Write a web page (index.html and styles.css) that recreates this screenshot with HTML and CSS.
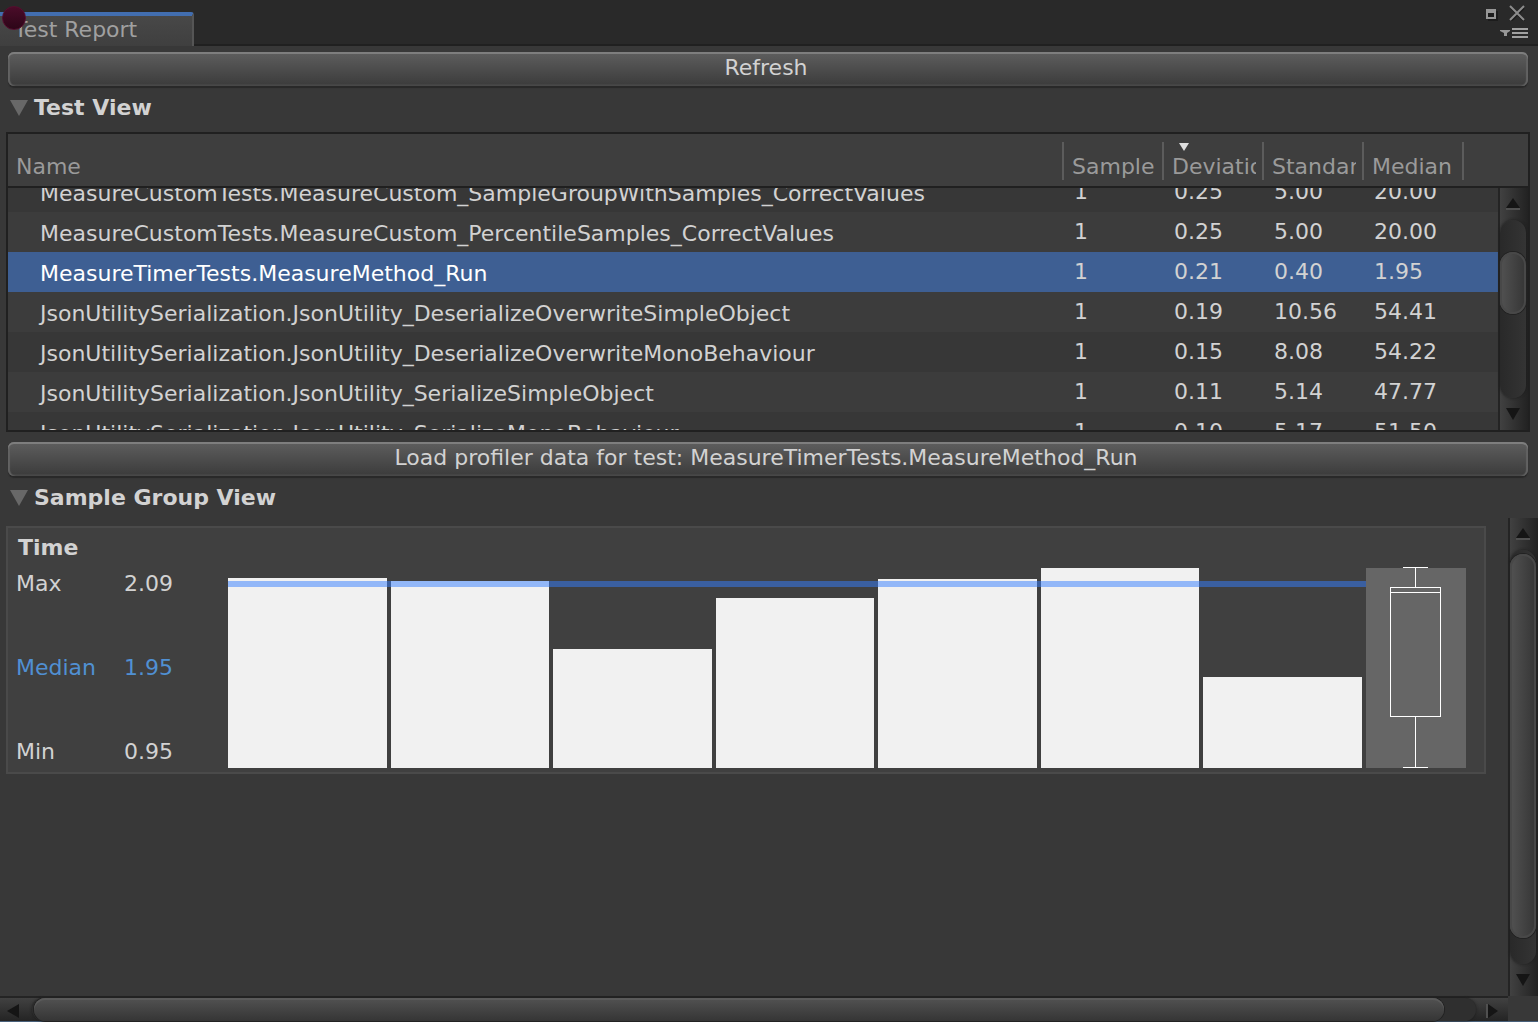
FILE: index.html
```html
<!DOCTYPE html>
<html lang="en">
<head>
<meta charset="utf-8">
<title>Test Report</title>
<link rel="stylesheet" href="styles.css">
</head>
<body>
<header class="tabbar">
  <button class="tab" type="button">Test Report</button>
  <span class="record-dot"></span>
  <div class="window-controls">
    <div class="window-row">
      <button class="icon-button" type="button" aria-label="Maximize"><svg width="12" height="12" viewBox="0 0 12 12"><path d="M2 2h10v10H2z" fill="#1c1c1c"/><path fill-rule="evenodd" d="M0 0h10v10H0zM2 4h6v4H2z" fill="#979797"/></svg></button>
      <button class="icon-button" type="button" aria-label="Close"><svg width="16" height="16" viewBox="0 0 16 16"><path d="M2 3L15 16M15 3L2 16" stroke="#1b1b1b" stroke-width="2"/><path d="M1 1L15 15M15 1L1 15" stroke="#8c8c8c" stroke-width="2"/></svg></button>
    </div>
    <button class="icon-button" type="button" aria-label="Window menu"><svg width="28" height="10" viewBox="0 0 28 10"><path d="M0 2h10v1L7 5v3H4V5L0 3z" fill="#979797"/><path d="M12 0h16v2H12zM12 4h16v2H12zM12 8h16v2H12z" fill="#a0a0a0"/></svg></button>
  </div>
</header>
<main class="window">
  <section class="test-view">
    <button class="wide-button" type="button">Refresh</button>
    <h2 class="foldout"><button class="foldout-button" type="button" aria-expanded="true"><svg width="18" height="16" viewBox="0 0 18 16"><path d="M0 0h18L9 16z"/></svg>Test View</button></h2>
    <div class="list">
      <table class="tests">
        <thead>
          <tr><th>Name</th><th><span>Sample</span></th><th class="sorted"><span>Deviation</span></th><th><span>Standard</span></th><th><span>Median</span></th></tr>
        </thead>
        <tbody>
          <tr><td>MeasureCustomTests.MeasureCustom_SampleGroupWithSamples_CorrectValues</td><td>1</td><td>0.25</td><td>5.00</td><td>20.00</td></tr>
          <tr><td>MeasureCustomTests.MeasureCustom_PercentileSamples_CorrectValues</td><td>1</td><td>0.25</td><td>5.00</td><td>20.00</td></tr>
          <tr class="selected"><td>MeasureTimerTests.MeasureMethod_Run</td><td>1</td><td>0.21</td><td>0.40</td><td>1.95</td></tr>
          <tr><td>JsonUtilitySerialization.JsonUtility_DeserializeOverwriteSimpleObject</td><td>1</td><td>0.19</td><td>10.56</td><td>54.41</td></tr>
          <tr><td>JsonUtilitySerialization.JsonUtility_DeserializeOverwriteMonoBehaviour</td><td>1</td><td>0.15</td><td>8.08</td><td>54.22</td></tr>
          <tr><td>JsonUtilitySerialization.JsonUtility_SerializeSimpleObject</td><td>1</td><td>0.11</td><td>5.14</td><td>47.77</td></tr>
          <tr><td>JsonUtilitySerialization.JsonUtility_SerializeMonoBehaviour</td><td>1</td><td>0.10</td><td>5.17</td><td>51.50</td></tr>
        </tbody>
      </table>
      <div class="scrollbar vertical list-scrollbar">
        <button class="arrow" type="button" aria-label="Scroll up"><svg width="14" height="12" viewBox="0 0 14 12"><path d="M0 11h14" stroke="#505050" stroke-width="2"/><path d="M7 0l7 10H0z" fill="#151515"/></svg></button>
        <div class="track"><div class="thumb"></div></div>
        <button class="arrow" type="button" aria-label="Scroll down"><svg width="14" height="12" viewBox="0 0 14 12"><path d="M0 0h14L7 12z" fill="#151515"/></svg></button>
      </div>
    </div>
    <button class="wide-button" type="button">Load profiler data for test: MeasureTimerTests.MeasureMethod_Run</button>
    <h2 class="foldout"><button class="foldout-button" type="button" aria-expanded="true"><svg width="18" height="16" viewBox="0 0 18 16"><path d="M0 0h18L9 16z"/></svg>Sample Group View</button></h2>
  </section>
  <section class="groups">
    <div class="groups-content">
      <article class="group">
        <h3 class="group-title">Time</h3>
        <div class="group-body">
          <dl class="stats">
            <div class="stat"><dt>Max</dt><dd>2.09</dd></div>
            <div class="stat median"><dt>Median</dt><dd>1.95</dd></div>
            <div class="stat"><dt>Min</dt><dd>0.95</dd></div>
          </dl>
          <div class="chart">
            <div class="bar" style="height:95%"></div>
            <div class="bar" style="height:93.5%"></div>
            <div class="bar" style="height:59.5%"></div>
            <div class="bar" style="height:85%"></div>
            <div class="bar" style="height:94.5%"></div>
            <div class="bar" style="height:100%"></div>
            <div class="bar" style="height:45.5%"></div>
            <div class="median-line"></div>
          </div>
          <svg class="box-plot" width="100" height="202" viewBox="0 -1 100 202"><path d="M0 0h100v200H0z" fill="#666"/><g fill="none" stroke="#fff" shape-rendering="crispEdges"><path d="M37 -.5H62M49.500 0V19M24.500 19.500H74.500V148.500H24.500zM24.500 24.500H74.500M49.500 149V199M37 199.500H62"/></g></svg>
        </div>
      </article>
    </div>
    <div class="scrollbar vertical groups-scrollbar">
      <button class="arrow" type="button" aria-label="Scroll up"><svg width="14" height="12" viewBox="0 0 14 12"><path d="M0 11h14" stroke="#505050" stroke-width="2"/><path d="M7 0l7 10H0z" fill="#151515"/></svg></button>
      <div class="track"><div class="thumb"></div></div>
      <button class="arrow" type="button" aria-label="Scroll down"><svg width="14" height="12" viewBox="0 0 14 12"><path d="M0 0h14L7 12z" fill="#151515"/></svg></button>
    </div>
  </section>
  <div class="bottom">
    <div class="scrollbar horizontal">
      <button class="arrow" type="button" aria-label="Scroll left"><svg width="12" height="14" viewBox="0 0 12 14"><path d="M12 0v14L0 7z" fill="#151515"/></svg></button>
      <div class="track"><div class="thumb"></div></div>
      <button class="arrow" type="button" aria-label="Scroll right"><svg width="12" height="14" viewBox="0 0 12 14"><path d="M1 0v14" stroke="#505050" stroke-width="2"/><path d="M2 0l10 7-10 7z" fill="#151515"/></svg></button>
    </div>
  </div>
</main>
</body>
</html>
```
FILE: styles.css
```css
* { box-sizing: border-box; }

body {
  margin: 0;
  min-height: 100vh;
  display: flex;
  flex-direction: column;
  background: #383838;
  color: #d2d2d2;
  font: 22px/26px "DejaVu Sans", Verdana, sans-serif;
}

button {
  margin: 0;
  padding: 0;
  border: 0;
  background: none;
  color: inherit;
  font: inherit;
}

svg { display: block; flex: none; }

/* Tab strip */
.tabbar {
  position: relative;
  display: flex;
  justify-content: space-between;
  height: 46px;
  padding-top: 12px;
  background: #292929;
  border-bottom: 2px solid #202020;
}

.tab {
  width: 194px;
  height: 34px;
  padding: 0 0 2px 14px;
  text-align: left;
  color: #a0a0a0;
  background: linear-gradient(#484848, #3f3f3f);
  border-top: 4px solid #426eb0;
  border-right: 2px solid #555;
  border-top-right-radius: 3px;
}

.record-dot {
  position: absolute;
  left: 2px;
  top: 6px;
  width: 24px;
  height: 24px;
  border-radius: 50%;
  background: linear-gradient(#4a0c29, #2d0618);
  border: 1px solid #560d2e;
}

.window-controls {
  display: flex;
  flex-direction: column;
  align-items: flex-end;
  gap: 7px;
  margin-top: -7px;
  padding-right: 10px;
}

.window-row {
  display: flex;
  align-items: flex-end;
  gap: 11px;
  padding-right: 3px;
}

/* Main window */
.window {
  flex: 1;
  display: flex;
  flex-direction: column;
}

.test-view {
  display: flex;
  flex-direction: column;
  padding: 6px 8px 0 6px;
}

.wide-button {
  height: 34px;
  margin: 0 2px;
  padding: 0 4px 3px 0;
  border-radius: 6px;
  background: linear-gradient(#5e5e5e, #3b3b3b);
  box-shadow: inset 0 2px #7e7e7e, inset 2px 0 1px #626262, inset -2px 0 1px #626262, inset 0 -2px #444, 0 2px 1px #292929;
  overflow: hidden;
  white-space: nowrap;
}

.foldout {
  margin: 0;
  height: 42px;
  padding-top: 2px;
  display: flex;
  align-items: center;
  font-size: 22px;
}

.foldout-button {
  display: flex;
  align-items: center;
  gap: 6px;
  padding-left: 4px;
}

.foldout svg { fill: #686868; }

/* Test list */
.list {
  display: flex;
  height: 300px;
  margin: 4px 0 10px;
  border: 2px solid #202020;
}

.tests {
  flex: 1;
  min-width: 0;
  display: flex;
  flex-direction: column;
}

.tests tr {
  display: grid;
  grid-template-columns: minmax(0, 1fr) repeat(4, 100px);
  padding-right: 36px;
}

.tests thead {
  display: block;
  height: 54px;
  margin-right: -30px;
  padding: 8px 28px 4px 0;
  background: #3e3e3e;
  border-bottom: 2px solid #202020;
}

.tests th {
  height: 38px;
  padding: 12px 6px 0 8px;
  text-align: left;
  font-weight: normal;
  color: #9a9a9a;
  white-space: nowrap;
  border-right: 2px solid #5c5c5c;
}

.tests th span {
  display: block;
  overflow: hidden;
}

.sorted { position: relative; }

.sorted::before {
  content: "";
  position: absolute;
  left: 15px;
  top: 1px;
  border: 5px solid transparent;
  border-top: 8px solid #dedede;
  border-bottom: 0;
}

/* The list is scrolled part of a row down. */
.tests tbody {
  display: block;
  flex: 1;
  min-height: 0;
  overflow: hidden;
}

.tests tbody tr:first-child { margin-top: -16px; }

.tests tbody tr { height: 40px; background: #373737; }
.tests tbody tr:nth-child(even) { background: #3c3c3c; }
.tests tbody tr.selected { background: #3e5f93; }

.tests td {
  padding: 7px 0 0 12px;
  white-space: nowrap;
}

.tests td:first-child { padding: 9px 0 0 32px; }
.selected td:first-child { color: #fff; }

/* Scroll bars */
.scrollbar { display: flex; flex: none; }

.scrollbar.vertical {
  flex-direction: column;
  width: 30px;
  border-left: 2px solid #242424;
  background: linear-gradient(90deg, #414141, #222);
}

.arrow {
  display: flex;
  align-items: center;
  justify-content: center;
}

.vertical .arrow { height: 32px; padding-right: 2px; }

.track { flex: 1; background: #2f2f2f; }

.vertical .track {
  display: flex;
  flex-direction: column;
  margin-right: 2px;
  padding: 32px 0 84px;
  border-radius: 13px;
  background: linear-gradient(90deg, #292929, #343434);
  box-shadow: 0 0 3px #1c1c1c;
}

.vertical .thumb {
  flex: 1;
  border-radius: 13px;
  background: linear-gradient(90deg, #525252, #353535);
  box-shadow: inset 0 0 0 2px #484848, 0 0 0 1px #222;
}

.list-scrollbar { margin-top: 54px; }
.groups-scrollbar .track { padding: 4px 0 26px; }

/* Sample groups */
.groups { flex: 1; display: flex; }

.groups-content { flex: 1; min-width: 0; padding: 8px 22px 0 6px; }

.group {
  padding: 7px 18px 3px 8px;
  background: #404040;
  border: 2px solid #4a4a4a;
}

.group-title { margin: 0 0 6px 2px; font-size: 22px; }

.group-body { display: flex; height: 202px; }

.stats {
  width: 212px;
  margin: 0;
  padding: 4px 0;
  display: flex;
  flex-direction: column;
  justify-content: space-between;
}

.stat { display: flex; }
.stat dt { width: 108px; }
.stat dd { margin: 0; }
.stat.median { color: #5090d3; }

.chart {
  flex: 1;
  position: relative;
  display: flex;
  align-items: flex-end;
  gap: 4px;
  margin: 1px 0;
  padding-right: 4px;
}

.bar { flex: 1; background: #f1f1f1; }

.median-line {
  position: absolute;
  left: 0;
  right: 0;
  top: 13px;
  height: 6px;
  background: rgba(51, 125, 255, .5);
}

/* Bottom scroll bar, with the window's edge below it */
.bottom {
  padding-right: 30px;
  border-bottom: 1px solid #48607a;
  background: #383838;
}

.horizontal {
  height: 25px;
  border-top: 2px solid #242424;
  background: linear-gradient(#414141, #242424);
}

.horizontal .arrow { width: 32px; padding: 2px 6px 0 0; }
.horizontal .arrow:last-child { padding: 2px 0 0; }

.horizontal .track {
  display: flex;
  padding: 0 32px 0 2px;
  border-radius: 13px;
  box-shadow: 0 0 3px #1c1c1c;
}

.horizontal .thumb {
  flex: 1;
  border-radius: 13px;
  background: linear-gradient(#525252, #353535);
  box-shadow: inset 0 2px #5a5a5a, 0 0 0 1px #222;
}
```
